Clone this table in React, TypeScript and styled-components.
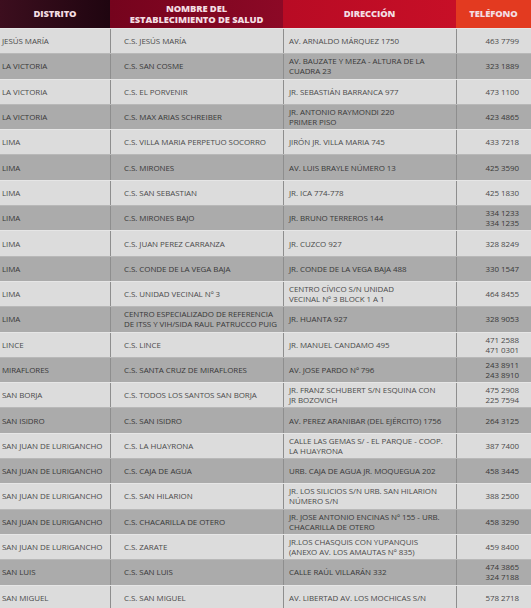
import React from "react";
import styled, { createGlobalStyle } from "styled-components";

const Global = createGlobalStyle`
  html, body { margin: 0; padding: 0; background: #d4d4d4; }
  body { font-family: "Open Sans", "Liberation Sans", sans-serif; }
`;

type RowData = { d: string; n: string; a: string; t: string[] };

const rows: RowData[] = [
  { d: "JESÚS MARÍA", n: "C.S. JESÚS MARÍA", a: "AV. ARNALDO MÁRQUEZ 1750", t: ["463 7799"] },
  { d: "LA VICTORIA", n: "C.S. SAN COSME", a: "AV. BAUZATE Y MEZA - ALTURA DE LA\nCUADRA 23", t: ["323 1889"] },
  { d: "LA VICTORIA", n: "C.S. EL PORVENIR", a: "JR. SEBASTIÁN BARRANCA 977", t: ["473 1100"] },
  { d: "LA VICTORIA", n: "C.S. MAX ARIAS SCHREIBER", a: "JR. ANTONIO RAYMONDI 220\nPRIMER PISO", t: ["423 4865"] },
  { d: "LIMA", n: "C.S. VILLA MARIA PERPETUO SOCORRO", a: "JIRÓN JR. VILLA MARIA 745", t: ["433 7218"] },
  { d: "LIMA", n: "C.S. MIRONES", a: "AV. LUIS BRAYLE NÚMERO 13", t: ["425 3590"] },
  { d: "LIMA", n: "C.S. SAN SEBASTIAN", a: "JR. ICA 774-778", t: ["425 1830"] },
  { d: "LIMA", n: "C.S. MIRONES BAJO", a: "JR. BRUNO TERREROS 144", t: ["334 1233", "334 1235"] },
  { d: "LIMA", n: "C.S. JUAN PEREZ CARRANZA", a: "JR. CUZCO 927", t: ["328 8249"] },
  { d: "LIMA", n: "C.S. CONDE DE LA VEGA BAJA", a: "JR. CONDE DE LA VEGA BAJA 488", t: ["330 1547"] },
  { d: "LIMA", n: "C.S. UNIDAD VECINAL Nº 3", a: "CENTRO CÍVICO S/N UNIDAD\nVECINAL Nº 3  BLOCK 1 A 1", t: ["464 8455"] },
  { d: "LIMA", n: "CENTRO ESPECIALIZADO DE REFERENCIA\nDE ITSS Y VIH/SIDA RAUL PATRUCCO PUIG", a: "JR. HUANTA 927", t: ["328 9053"] },
  { d: "LINCE", n: "C.S. LINCE", a: "JR. MANUEL CANDAMO 495", t: ["471 2588", "471 0301"] },
  { d: "MIRAFLORES", n: "C.S. SANTA CRUZ DE MIRAFLORES", a: "AV. JOSE PARDO Nº 796", t: ["243 8911", "243 8910"] },
  { d: "SAN BORJA", n: "C.S. TODOS LOS SANTOS SAN BORJA", a: "JR. FRANZ SCHUBERT S/N ESQUINA CON\nJR BOZOVICH", t: ["475 2908", "225 7594"] },
  { d: "SAN ISIDRO", n: "C.S. SAN ISIDRO", a: "AV. PEREZ ARANIBAR (DEL EJÉRCITO) 1756", t: ["264 3125"] },
  { d: "SAN JUAN DE LURIGANCHO", n: "C.S. LA HUAYRONA", a: "CALLE LAS GEMAS S/ -  EL PARQUE - COOP.\nLA HUAYRONA", t: ["387 7400"] },
  { d: "SAN JUAN DE LURIGANCHO", n: "C.S. CAJA DE AGUA", a: "URB. CAJA DE AGUA JR. MOQUEGUA 202", t: ["458 3445"] },
  { d: "SAN JUAN DE LURIGANCHO", n: "C.S. SAN HILARION", a: "JR. LOS SILICIOS S/N URB. SAN HILARION\nNÚMERO S/N", t: ["388 2500"] },
  { d: "SAN JUAN DE LURIGANCHO", n: "C.S. CHACARILLA DE OTERO", a: "JR. JOSE ANTONIO ENCINAS Nº 155 - URB.\nCHACARILLA DE OTERO", t: ["458 3290"] },
  { d: "SAN JUAN DE LURIGANCHO", n: "C.S. ZARATE", a: "JR.LOS CHASQUIS CON YUPANQUIS\n(ANEXO AV. LOS AMAUTAS Nº 835)", t: ["459 8400"] },
  { d: "SAN LUIS", n: "C.S. SAN LUIS", a: "CALLE RAÚL VILLARÁN 332", t: ["474 3865", "324 7188"] },
  { d: "SAN MIGUEL", n: "C.S. SAN MIGUEL", a: "AV. LIBERTAD AV. LOS MOCHICAS S/N", t: ["578 2718"] },
];

const COLS = "110px 173px 173px 75px";

const Table = styled.div`
  width: 531px;
  height: 608px;
  overflow: hidden;
  display: flex;
  flex-direction: column;
`;

const HeaderRow = styled.div`
  display: grid;
  grid-template-columns: ${COLS};
  height: 28px;
  flex: 0 0 28px;
`;

const HeadCell = styled.div<{ $bg: string }>`
  background: ${(p) => p.$bg};
  color: #f3dde2;
  font-family: "Open Sans", "Liberation Sans", sans-serif;
  font-weight: 800;
  font-size: 9.4px;
  line-height: 10.5px;
  display: flex;
  align-items: center;
  justify-content: center;
  text-align: center;
  white-space: pre-line;
  padding-top: 1px;
  box-sizing: border-box;
  letter-spacing: -0.1px;
`;

const BodyRow = styled.div<{ $dark: boolean }>`
  display: grid;
  grid-template-columns: ${COLS};
  height: 25.3px;
  flex: 0 0 25.3px;
  background: ${(p) => (p.$dark ? "#ababab" : "#dcdcdc")};
  color: ${(p) => (p.$dark ? "#383838" : "#4a4a4a")};
  border-top: 1px solid ${(p) => (p.$dark ? "#b8b8b8" : "#e6e6e6")};
  box-sizing: border-box;
`;

const Cell = styled.div<{ $pl: number; $right?: boolean; $line?: boolean }>`
  display: flex;
  flex-direction: column;
  justify-content: center;
  align-items: ${(p) => (p.$right ? "flex-end" : "flex-start")};
  padding-left: ${(p) => p.$pl}px;
  padding-right: ${(p) => (p.$right ? 12 : 0)}px;
  border-left: ${(p) => (p.$line ? "1px solid #8e8e8e" : "none")};
  font-size: 7.95px;
  line-height: 10px;
  white-space: pre-line;
  box-sizing: border-box;
  overflow: visible;
  letter-spacing: -0.05px;
`;

export default function App() {
  return (
    <>
      <Global />
      <Table>
        <HeaderRow>
          <HeadCell $bg="linear-gradient(to right, #3c0e1e, #1f0510)">DISTRITO</HeadCell>
          <HeadCell $bg="linear-gradient(to right, #75031d, #8c0926)">{"NOMBRE DEL\nESTABLECIMIENTO DE SALUD"}</HeadCell>
          <HeadCell $bg="linear-gradient(to right, #b80b24, #c70f27)">DIRECCIÓN</HeadCell>
          <HeadCell $bg="#e33a20">TELÉFONO</HeadCell>
        </HeaderRow>
        {rows.map((r, i) => (
          <BodyRow key={i} $dark={i % 2 === 1}>
            <Cell $pl={2}>{r.d}</Cell>
            <Cell $pl={13} $line>{r.n}</Cell>
            <Cell $pl={5} $line>{r.a}</Cell>
            <Cell $pl={0} $right $line>
              {r.t.map((p, j) => (
                <span key={j}>{p}</span>
              ))}
            </Cell>
          </BodyRow>
        ))}
      </Table>
    </>
  );
}
